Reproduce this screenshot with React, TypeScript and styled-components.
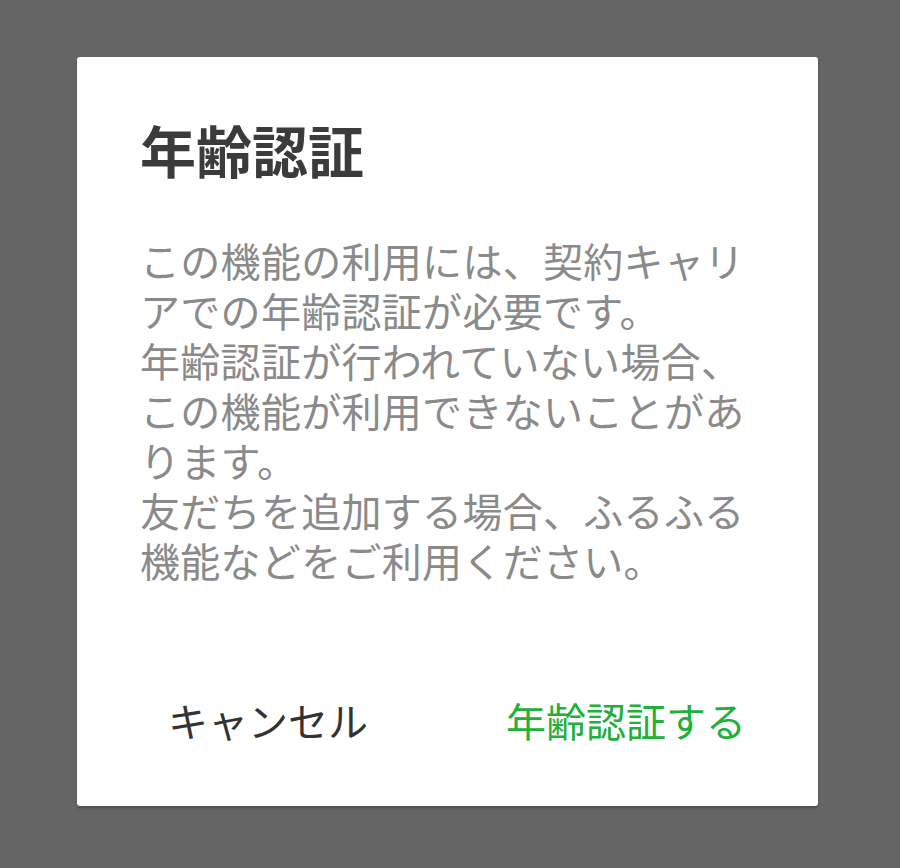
import styled, { createGlobalStyle } from "styled-components";

const GlobalStyle = createGlobalStyle`
  html, body {
    margin: 0;
    padding: 0;
    background: #656565;
  }
  body {
    font-family: "Noto Sans CJK JP", "Noto Sans", sans-serif;
  }
`;

const Overlay = styled.div`
  width: 900px;
  height: 868px;
  background: #656565;
  display: flex;
  padding: 57px 0 0 77px;
  box-sizing: border-box;
`;

const Dialog = styled.div`
  width: 741px;
  height: 749px;
  background: #ffffff;
  border-radius: 3px;
  box-shadow: 0 2px 3px rgba(0, 0, 0, 0.25);
  box-sizing: border-box;
  padding: 52px 66px 0 63px;
  display: flex;
  flex-direction: column;
`;

const Title = styled.h2`
  margin: 0;
  font-size: 56px;
  font-weight: 700;
  line-height: 80px;
  color: #3b3b3b;
`;

const Message = styled.p`
  margin: 46px 0 0 0;
  font-size: 40px;
  letter-spacing: 0.3px;
  line-height: 50px;
  color: #8a8a8a;
  white-space: pre-line;
`;

const Actions = styled.div`
  margin-top: auto;
  margin-bottom: 58px;
  display: flex;
  justify-content: space-between;
  align-items: center;
  padding: 0 6px 0 28px;
`;

const ActionButton = styled.button<{ $primary?: boolean }>`
  border: none;
  background: none;
  padding: 0;
  font-family: inherit;
  font-size: 40px;
  line-height: 56px;
  color: ${({ $primary }) => ($primary ? "#22b03a" : "#333333")};
  cursor: pointer;
`;

const message = `この機能の利用には、契約キャリ
アでの年齢認証が必要です。
年齢認証が行われていない場合、
この機能が利用できないことがあ
ります。
友だちを追加する場合、ふるふる
機能などをご利用ください。`;

export default function App() {
  return (
    <>
      <GlobalStyle />
      <Overlay>
        <Dialog>
          <Title>年齢認証</Title>
          <Message>{message}</Message>
          <Actions>
            <ActionButton>キャンセル</ActionButton>
            <ActionButton $primary>年齢認証する</ActionButton>
          </Actions>
        </Dialog>
      </Overlay>
    </>
  );
}
